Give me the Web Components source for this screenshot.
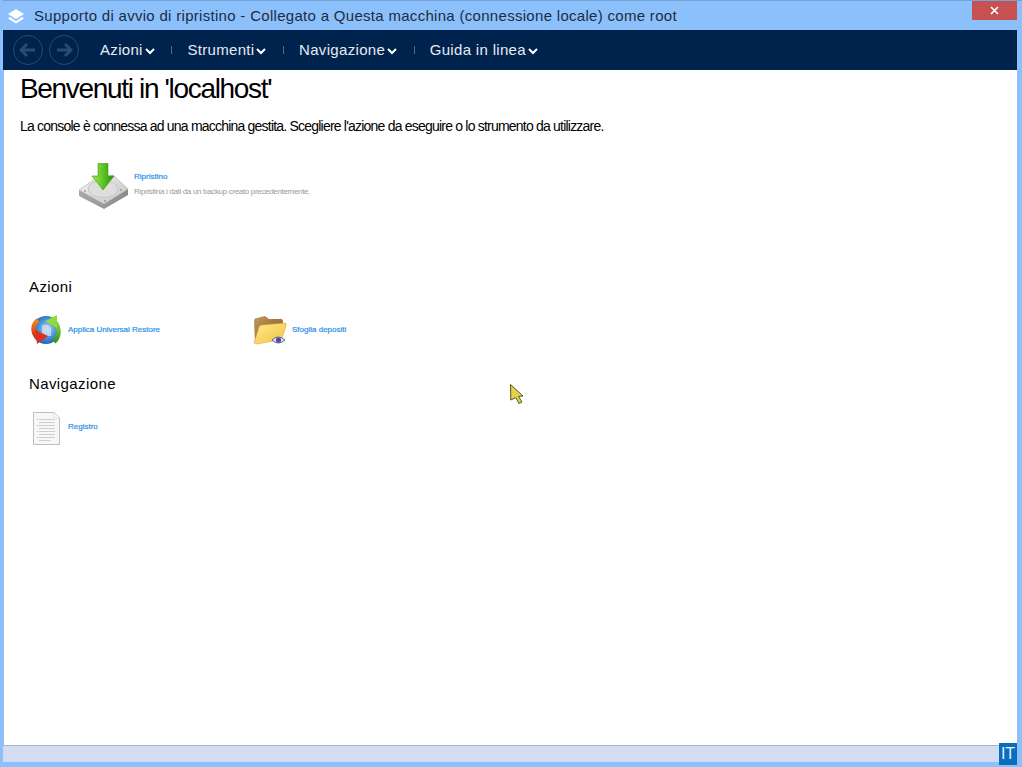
<!DOCTYPE html>
<html lang="it">
<head>
<meta charset="utf-8">
<title>Supporto di avvio di ripristino</title>
<style>
  html, body { margin: 0; height: 100%; overflow: hidden; }
  body { font-family: "Liberation Sans", Arial, sans-serif; background: #8cc0fb; }
</style>
</head>
<body>
<app-window>
  <span slot="title">Supporto di avvio di ripristino - Collegato a Questa macchina (connessione locale) come root</span>
  <nav-bar slot="nav">
    <nav-menu>Azioni</nav-menu>
    <nav-menu sep>Strumenti</nav-menu>
    <nav-menu sep>Navigazione</nav-menu>
    <nav-menu sep>Guida in linea</nav-menu>
  </nav-bar>
  <welcome-page></welcome-page>
</app-window>

<script>
const ICONS = {
  restore: `<svg width="50" height="46" viewBox="0 0 50 46">
    <defs>
      <linearGradient id="d" x1="0" y1="0" x2="1" y2="1"><stop offset="0" stop-color="#f4f4f4"/><stop offset="1" stop-color="#c4c4c4"/></linearGradient>
      <linearGradient id="s" x1="0" y1="0" x2="1" y2="0"><stop offset="0" stop-color="#a8a8a8"/><stop offset="1" stop-color="#8a8a8a"/></linearGradient>
      <linearGradient id="g" x1="0" y1="0" x2="1" y2="0"><stop offset="0" stop-color="#a6e650"/><stop offset=".55" stop-color="#58c020"/><stop offset="1" stop-color="#2c8f10"/></linearGradient>
    </defs>
    <path d="M0 27 L25 41 L49 26 L49 32 L25 46 L0 33Z" fill="url(#s)"/>
    <path d="M0 27 L16 16 L34 12 L49 26 L25 41Z" fill="url(#d)" stroke="#a4a4a4" stroke-width=".6"/>
    <ellipse cx="24" cy="26" rx="15" ry="8.5" fill="#dedede" stroke="#c6c6c6"/>
    <path d="M19 .5 H29 V13 H35 L24 27 L13 13 H19Z" fill="url(#g)" stroke="#3b9a16" stroke-width=".6"/>
    <circle cx="6" cy="28" r=".8" fill="#777"/><circle cx="42" cy="27" r=".8" fill="#777"/><circle cx="26" cy="38" r=".8" fill="#777"/>
  </svg>`,
  universal: `<svg width="30" height="30" viewBox="0 0 30 30">
    <defs>
      <radialGradient id="b" cx=".55" cy=".45" r=".6"><stop offset="0" stop-color="#b9d6f4"/><stop offset=".5" stop-color="#4f95dc"/><stop offset="1" stop-color="#0f5cb0"/></radialGradient>
      <linearGradient id="r" x1="0" y1="0" x2="0" y2="1"><stop offset="0" stop-color="#f08a1e"/><stop offset="1" stop-color="#d8281a"/></linearGradient>
      <linearGradient id="v" x1="0" y1="0" x2="0" y2="1"><stop offset="0" stop-color="#8fdc3c"/><stop offset="1" stop-color="#36941c"/></linearGradient>
    </defs>
    <circle cx="15" cy="15" r="14" fill="url(#b)"/>
    <path d="M11 10 H17 L20 13 V21 H11Z" fill="#cfdff0" opacity=".8"/>
    <path d="M7 5 C1 10 1 18 7 23" fill="none" stroke="url(#r)" stroke-width="4.5"/>
    <path d="M4 15 L17 21 L6 29Z" fill="#dc3018"/>
    <path d="M23 7 C29 12 29 21 23 27" fill="none" stroke="url(#v)" stroke-width="4.5"/>
    <path d="M14 6 L26 0 L26 13Z" fill="#8fdc3c"/>
  </svg>`,
  folder: `<svg width="34" height="31" viewBox="0 0 34 31">
    <defs>
      <linearGradient id="f1" x1="0" y1="0" x2="1" y2="1"><stop offset="0" stop-color="#c49a5c"/><stop offset="1" stop-color="#7a5522"/></linearGradient>
      <linearGradient id="f2" x1="0" y1="0" x2="1" y2="1"><stop offset="0" stop-color="#ffe88e"/><stop offset="1" stop-color="#f0c53e"/></linearGradient>
    </defs>
    <path d="M1 6 Q1 3 4 3 L12 1 L16 4 L28 4 Q30 4 30 7 V12 L6 28 L2 27Z" fill="url(#f1)"/>
    <path d="M1 28 L6 12 Q7 10 9 10 L32 8 Q34 8 33 11 L29 23 Q28 25 26 25 L4 29Z" fill="url(#f2)" stroke="#cf9f38" stroke-width=".5"/>
    <path d="M19 25 Q25 19 32 25 Q25 31 19 25Z" fill="#e8e6f6" stroke="#5b5a9c"/>
    <circle cx="25.5" cy="25" r="2.6" fill="#4e4c98"/>
  </svg>`,
  log: `<svg width="27" height="33" viewBox="0 0 27 33">
    <path d="M.5 .5 H21 L26.5 6 V32.5 H.5Z" fill="#f7f7f7" stroke="#bfbfbf"/>
    <path d="M21 .5 V6 H26.5Z" fill="#fff" stroke="#d4d4d4" stroke-width=".7"/>
    <path d="M6 7.5H22M6 10.5H22M6 13.5H22M6 16.5H22M6 19.5H22M6 22.5H22M6 25.5H22M6 28.5H18" stroke="#cdcdcd"/>
    <path d="M4 7.5H5M4 13.5H5M4 19.5H5M4 25.5H5" stroke="#d8b26a"/>
  </svg>`
};

class AppWindow extends HTMLElement {
  constructor() {
    super();
    this.attachShadow({mode: "open"}).innerHTML = `
      <style>
        :host { display: flex; flex-direction: column; height: 767px; position: relative; box-sizing: border-box; padding: 0 5px 5px 3px; }
        .title { flex: 0 0 30px; display: flex; align-items: center; gap: 10px; padding-left: 5px; color: #1c2c44; font-size: 15px; letter-spacing: .3px; margin-right: -5px; border-top: 1px solid #6fa3dc; box-sizing: border-box; }
        .close { position: absolute; top: 1px; left: 972px; width: 45px; height: 19px; background: #c75050; display: flex; align-items: center; justify-content: center; }
        .nav { flex: 0 0 40px; }
        .body { flex: 1; background: #fff; min-height: 0; margin-left: 1px; overflow: hidden; }
        .status { flex: 0 0 17px; background: #d3dcf0; border-top: 1px solid #a9b4c8; box-sizing: border-box; }
        .lang { position: absolute; left: 999px; top: 743px; width: 18px; height: 22px; background: #0a6ebd; color: #e8f2fb; font-size: 16px; display: flex; align-items: center; justify-content: center; }
        .cursor { position: absolute; left: 510px; top: 384px; }
      </style>
      <div class="title">
        <svg width="16" height="16" viewBox="0 0 16 16"><path d="M8 1 L16 6 L8 11 L0 6Z" fill="#fff"/><path d="M2 9 L8 13 L14 9 L16 10.5 L8 15.5 L0 10.5Z" fill="#fff"/></svg>
        <slot name="title"></slot>
      </div>
      <div class="close"><svg width="9" height="9" viewBox="0 0 9 9"><path d="M1 1L8 8M8 1L1 8" stroke="#fff" stroke-width="1.6"/></svg></div>
      <div class="nav"><slot name="nav"></slot></div>
      <div class="body"><slot></slot></div>
      <div class="status"></div>
      <div class="lang">IT</div>
      <svg class="cursor" width="14" height="20" viewBox="0 0 14 20"><path d="M.5 .5 L13 12 L8.5 12.5 L12 18 L9 19.5 L5.8 13.6 L.8 16Z" fill="#e4d24a" stroke="#57552a"/></svg>`;
  }
}
customElements.define("app-window", AppWindow);

class NavBar extends HTMLElement {
  constructor() {
    super();
    this.attachShadow({mode: "open"}).innerHTML = `
      <style>
        :host { display: flex; align-items: center; height: 40px; background: #00234d; padding-left: 10px; box-sizing: border-box; }
        .round { width: 30px; height: 30px; border: 1.5px solid #2b4a70; border-radius: 50%; box-sizing: border-box; display: flex; align-items: center; justify-content: center; margin-right: 6px; }
        .menus { display: flex; align-items: center; margin-left: 15px; padding-bottom: 2px; }
      </style>
      <div class="round"><svg width="18" height="16" viewBox="0 0 18 16"><path d="M8 2 L2 8 L8 14 M2 8 H16" fill="none" stroke="#2b4a70" stroke-width="3"/></svg></div>
      <div class="round"><svg width="18" height="16" viewBox="0 0 18 16"><path d="M10 2 L16 8 L10 14 M16 8 H2" fill="none" stroke="#2b4a70" stroke-width="3"/></svg></div>
      <div class="menus"><slot></slot></div>`;
  }
}
customElements.define("nav-bar", NavBar);

class NavMenu extends HTMLElement {
  constructor() {
    super();
    this.attachShadow({mode: "open"}).innerHTML = `
      <style>
        :host { display: flex; align-items: center; color: #e6ebf2; font-size: 15px; letter-spacing: .32px; }
        .sep { width: 1px; height: 8px; background: #4a6a90; margin: 2px 15px 0 16.6px; }
        :host(:not([sep])) .sep { display: none; }
        svg { margin-left: 2px; margin-top: 4px; }
      </style>
      <span class="sep"></span><slot></slot>
      <svg width="10" height="7" viewBox="0 0 10 7"><path d="M1 1 L5 5 L9 1" fill="none" stroke="#fff" stroke-width="2"/></svg>`;
  }
}
customElements.define("nav-menu", NavMenu);

class ActionLink extends HTMLElement {
  constructor() {
    super();
    this.attachShadow({mode: "open"}).innerHTML = `
      <style>
        :host { display: flex; align-items: center; font-size: 8px; color: #1f8fe8; }
        .icon { display: flex; align-self: flex-start; }
        .text { margin-bottom: var(--text-lift, 5px); }
        .label { -webkit-text-stroke: .2px; }
        .desc { color: #999; margin-top: 6px; letter-spacing: -.33px; }
      </style>
      <div class="icon"></div>
      <div class="text"><div class="label"></div></div>`;
  }
  connectedCallback() {
    const root = this.shadowRoot;
    const icon = root.querySelector(".icon");
    icon.innerHTML = ICONS[this.getAttribute("icon")];
    icon.style.boxSizing = "border-box";
    icon.style.width = this.getAttribute("icon-box") + "px";
    icon.style.paddingLeft = this.getAttribute("icon-left") + "px";
    root.querySelector(".label").textContent = this.getAttribute("label");
    if (this.hasAttribute("desc")) {
      const d = document.createElement("div");
      d.className = "desc";
      d.textContent = this.getAttribute("desc");
      root.querySelector(".text").append(d);
    }
  }
}
customElements.define("action-link", ActionLink);

class WelcomePage extends HTMLElement {
  constructor() {
    super();
    this.attachShadow({mode: "open"}).innerHTML = `
      <style>
        :host { display: block; color: #000; }
        h1 { font-weight: normal; font-size: 28px; letter-spacing: -1.33px; line-height: 32px; margin: 3px 0 0 16px; }
        p { font-size: 14px; letter-spacing: -.79px; line-height: 16px; margin: 13px 0 0 16px; }
        .main { margin: 29px 0 0 74px; }
        h2 { font-weight: normal; font-size: 15px; letter-spacing: .4px; line-height: 18px; margin: 0 0 0 25px; }
        .azioni { margin-top: 69px; }
        .nav-h { margin-top: 29px; }
        .row { display: flex; margin: 19px 0 0 25px; }
        .row.first { --text-lift: 3px; }
        .row action-link:first-child { width: 224px; }
      </style>
      <h1>Benvenuti in 'localhost'</h1>
      <p>La console è connessa ad una macchina gestita. Scegliere l'azione da eseguire o lo strumento da utilizzare.</p>
      <div class="main"><action-link icon="restore" icon-box="56" icon-left="1" label="Ripristino" desc="Ripristina i dati da un backup creato precedentemente."></action-link></div>
      <h2 class="azioni">Azioni</h2>
      <div class="row first">
        <action-link icon="universal" icon-box="39" icon-left="2" label="Applica Universal Restore"></action-link>
        <action-link icon="folder" icon-box="39" icon-left="0" label="Sfoglia depositi"></action-link>
      </div>
      <h2 class="nav-h">Navigazione</h2>
      <div class="row"><action-link icon="log" icon-box="39" icon-left="4" label="Registro"></action-link></div>`;
  }
}
customElements.define("welcome-page", WelcomePage);
</script>
</body>
</html>
